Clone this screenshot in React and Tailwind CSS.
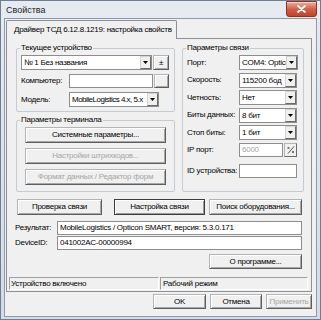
import React from "react";

function Arrow() {
  return (
    <svg width="5" height="3" viewBox="0 0 5 3" aria-hidden="true">
      <path d="M0 0h5L2.5 3z" fill="#000" />
    </svg>
  );
}

function Btn({ children, className = "", disabled = false, main = false }) {
  return (
    <div
      className={[
        "flex items-center justify-center bg-[#f0f0f0] whitespace-nowrap",
        main
          ? "border border-[#3c3c3c] shadow-[inset_1px_1px_0_#fff,inset_-1px_-1px_0_#9a9a9a]"
          : "border border-[#b4b4b4] border-r-[#5e5e5e] border-b-[#5e5e5e] shadow-[inset_1px_1px_0_#fff,inset_-1px_-1px_0_#a8a8a8]",
        disabled ? "text-[#a6a6a6]" : "text-black",
        className,
      ].join(" ")}
    >
      {children}
    </div>
  );
}

function Combo({ value, className = "", tight = false }) {
  return (
    <div className={`flex h-[15px] bg-white border border-[#8d8d8d] ${className}`}>
      <span
        className={`flex-1 pl-[2px] leading-[13px] overflow-hidden whitespace-nowrap ${
          tight ? "tracking-[-0.5px]" : ""
        }`}
      >
        {value}
      </span>
      <span className="w-[11px] shrink-0 flex items-center justify-center bg-[#f0f0f0] border border-[#d4d4d4] border-r-[#6a6a6a] border-b-[#6a6a6a]">
        <Arrow />
      </span>
    </div>
  );
}

function Field({ value = "", className = "", muted = false }) {
  return (
    <div
      className={`h-[14px] bg-white border border-[#8d8d8d] pl-[2px] leading-[12px] truncate ${
        muted ? "text-[#a6a6a6]" : ""
      } ${className}`}
    >
      {value}
    </div>
  );
}

function Group({ title, className = "", children }) {
  return (
    <div className={`relative border border-[#c4cbd2] rounded-[2px] ${className}`}>
      <span className="absolute -top-[7px] left-[3px] px-[1px] bg-[#f0f0f0] leading-[11px]">
        {title}
      </span>
      {children}
    </div>
  );
}

function Row({ label, children }) {
  return (
    <div className="flex items-center h-[15px]">
      <span className="w-[52px] shrink-0 whitespace-nowrap">{label}</span>
      {children}
    </div>
  );
}

export default function App() {
  return (
    <div className="w-[321px] h-[320px] flex flex-col overflow-hidden border border-[#6f7f91] bg-linear-to-b from-[#e6ebf1] via-[#dbe3ec] to-[#d3dce7] text-black text-[8px] leading-[10px] tracking-[-0.25px] font-['Liberation_Sans',Arial,sans-serif]">
      {/* Title bar */}
      <div className="h-[17px] shrink-0 flex items-start justify-between pl-[5px] pr-[3px]">
        <span className="mt-[4px] text-[9px] leading-[10px] tracking-normal text-[#1b1b1b]">Свойства</span>
        <div className="w-[31px] h-[16px] flex items-center justify-center rounded-b-[3px] border border-[#8b3425] bg-linear-to-b from-[#eab0a2] via-[#d65e46] to-[#c2432c] shadow-[inset_0_1px_0_#f6d0c6]">
          <svg width="9" height="8" viewBox="0 0 9 8" aria-hidden="true">
            <path d="M1 1l7 6M8 1L1 7" stroke="#fff" strokeWidth="1.8" strokeLinecap="round" />
          </svg>
        </div>
      </div>

      {/* Client area */}
      <div className="flex-1 mx-[3px] mb-[2px] bg-[#f0f0f0] border border-[#8e9aa8] flex flex-col pt-[1px] pl-[1px] pr-[4px]">
        {/* Tab strip */}
        <div className="flex">
          <div className="relative z-10 -mb-[1px] h-[19px] bg-[#f0f0f0] border border-b-0 border-[#8c8f96] rounded-t-[2px] pl-[7px] pr-[4px] flex items-center whitespace-nowrap">
            Драйвер ТСД 6.12.8.1219: настройка свойств
          </div>
        </div>

        {/* Tab panel */}
        <div className="h-[254px] shrink-0 border border-[#8c8f96] bg-[#f0f0f0] flex flex-col">
          <div className="flex pt-[9px] pl-[9px]">
            <div className="flex flex-col gap-[8px] w-[159px]">
              <Group title="Текущее устройство" className="h-[64px] pt-[6px] pl-[4px]">
                <div className="flex items-center h-[15px]">
                  <Combo value="№  1 Без названия" className="w-[131px]" />
                  <Btn className="ml-[1px] w-[16px] h-[15px]">±</Btn>
                </div>
                <div className="flex items-center h-[14px] mt-[4px]">
                  <span className="w-[48px] shrink-0">Компьютер:</span>
                  <Field className="w-[84px]" />
                  <Btn className="ml-[1px] w-[15px] h-[14px]" />
                </div>
                <div className="flex items-center h-[15px] mt-[4px]">
                  <span className="w-[48px] shrink-0">Модель:</span>
                  <Combo value="MobileLogistics 4.x, 5.x" className="w-[90px]" tight />
                </div>
              </Group>

              <Group title="Параметры терминала" className="h-[72px] pt-[6px] px-[8px] flex flex-col gap-[5px]">
                <Btn className="h-[16px]">Системные параметры...</Btn>
                <Btn className="h-[16px]" disabled>Настройки штрихкодов...</Btn>
                <Btn className="h-[16px]" disabled>Формат данных / Редактор форм</Btn>
              </Group>
            </div>

            <Group title="Параметры связи" className="ml-[7px] w-[122px] h-[144px] pt-[6px] pl-[4px] flex flex-col gap-[2.5px]">
              <Row label="Порт:">
                <Combo value="COM4: Opticon" className="w-[59px]" />
              </Row>
              <Row label="Скорость:">
                <Combo value="115200 бод" className="w-[58px]" />
              </Row>
              <Row label="Четность:">
                <Combo value="Нет" className="w-[58px]" />
              </Row>
              <Row label="Биты данных:">
                <Combo value="8 бит" className="w-[58px]" />
              </Row>
              <Row label="Стоп биты:">
                <Combo value="1 бит" className="w-[58px]" />
              </Row>
              <Row label="IP порт:">
                <Field value="6000" muted className="w-[44px]" />
                <div className="ml-[1px] w-[13px] h-[14px] flex items-center justify-center bg-[#f0f0f0] border border-[#b4b4b4] border-r-[#6a6a6a] border-b-[#6a6a6a]">
                  <svg width="8" height="8" viewBox="0 0 8 8" aria-hidden="true">
                    <path d="M7 0.5L1 7.5" stroke="#555" strokeWidth="1" />
                    <rect x="0.5" y="1" width="2" height="2" fill="#777" />
                    <rect x="5" y="5" width="2" height="2" fill="#777" />
                  </svg>
                </div>
              </Row>
              <div className="flex items-center h-[14px] mt-[4px]">
                <span className="w-[52px] shrink-0 whitespace-nowrap">ID устройства:</span>
                <Field className="w-[58px]" />
              </div>
            </Group>
          </div>

          {/* Action buttons */}
          <div className="flex mt-[7px] pl-[10px]">
            <Btn className="w-[85px] h-[16px]">Проверка связи</Btn>
            <Btn className="ml-[12px] w-[91px] h-[16px]" main>Настройка связи</Btn>
            <Btn className="ml-[4px] w-[93px] h-[16px]">Поиск оборудования...</Btn>
          </div>

          {/* Result */}
          <div className="flex flex-col gap-[1px] mt-[6px] pl-[8px]">
            <div className="flex items-center h-[14px]">
              <span className="w-[42px] shrink-0">Результат:</span>
              <Field value="MobileLogistics / Opticon SMART, версия: 5.3.0.171" className="w-[245px]" />
            </div>
            <div className="flex items-center h-[14px]">
              <span className="w-[42px] shrink-0">DeviceID:</span>
              <Field value="041002AC-00000994" className="w-[245px]" />
            </div>
          </div>

          <div className="flex mt-[4px] pl-[202px]">
            <Btn className="w-[93px] h-[15px]">О программе...</Btn>
          </div>

          {/* Status bar */}
          <div className="flex mt-[8px] pl-[2px] pr-[3px] h-[13px]">
            <div className="w-[150px] border border-[#a0a0a0] border-r-white border-b-white pl-[1px] leading-[11px]">
              Устройство включено
            </div>
            <div className="flex-1 ml-[1px] border border-[#a0a0a0] border-r-white border-b-white pl-[2px] leading-[11px]">
              Рабочий режим
            </div>
          </div>
        </div>

        {/* Dialog buttons */}
        <div className="flex justify-end mt-[2px] h-[15px] gap-[4px]">
          <Btn className="w-[53px]">OK</Btn>
          <Btn className="w-[52px]">Отмена</Btn>
          <Btn className="w-[46px]" disabled>Применить</Btn>
        </div>
      </div>
    </div>
  );
}
